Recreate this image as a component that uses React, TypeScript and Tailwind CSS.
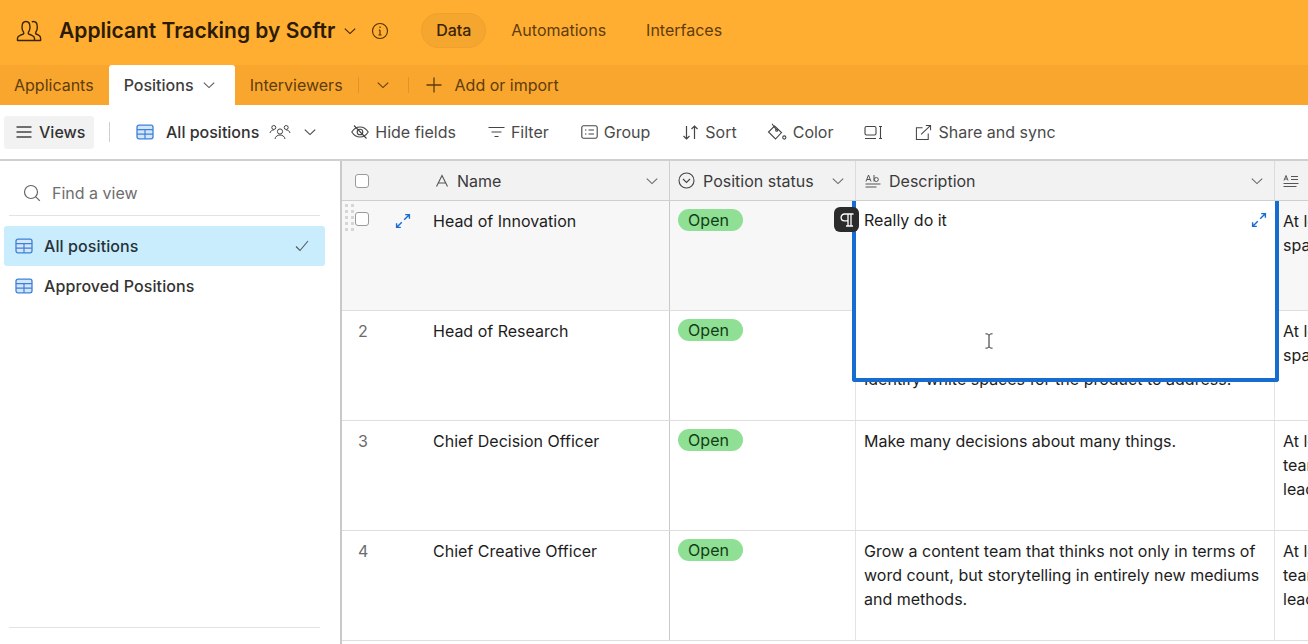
import React from 'react'

function Chevron({ className = '' }: { className?: string }) {
  return (
    <svg className={className} width="14" height="14" viewBox="0 0 14 14" fill="none" stroke="currentColor" strokeWidth="1.1">
      <path d="M1.800 4.600 7 9.600l5.200-5" />
    </svg>
  )
}

function GridIcon() {
  return (
    <svg width="18" height="16" viewBox="0 0 18 16" fill="none">
      <rect x="1" y="1.200" width="16" height="13.600" rx="2" fill="#d5e5fb" stroke="#3b82d8" strokeWidth="1.300" />
      <path d="M1 5.600h16M1 10.200h16M9 5.600v9.200" stroke="#3b82d8" strokeWidth="1.200" />
    </svg>
  )
}

function ExpandIcon({ className = '' }: { className?: string }) {
  return (
    <svg className={className} width="16" height="16" viewBox="0 0 16 16" fill="none" stroke="#166ccf" strokeWidth="1.400">
      <path d="M9.200 6.800 14 2M10.200 1.600h4.200v4.200" />
      <path d="M6.800 9.200 2 14M1.600 10.200v4.200h4.200" />
    </svg>
  )
}

function ToolItem({ icon, label, className = '' }: { icon: React.ReactNode; label?: string; className?: string }) {
  return (
    <div className={`flex items-center gap-[6px] text-[16px] text-[#4a4a4a] ${className}`}>
      {icon}
      {label && <span>{label}</span>}
    </div>
  )
}

type Row = {
  num: string
  name: string
  desc: string[]
  next: string[]
}

const rows: Row[] = [
  {
    num: '',
    name: 'Head of Innovation',
    desc: [],
    next: ['At least 5 years', 'spanning many fields'],
  },
  {
    num: '2',
    name: 'Head of Research',
    desc: ['Talk to customers and study the market.', 'Turn what you learn into clear findings.', 'Identify white spaces for the product to address.'],
    next: ['At least 5 years', 'spanning many fields'],
  },
  {
    num: '3',
    name: 'Chief Decision Officer',
    desc: ['Make many decisions about many things.'],
    next: ['At least 10 years', 'team management', 'leadership'],
  },
  {
    num: '4',
    name: 'Chief Creative Officer',
    desc: [
      'Grow a content team that thinks not only in terms of',
      'word count, but storytelling in entirely new mediums',
      'and methods.',
    ],
    next: ['At least 10 years', 'team management', 'leadership'],
  },
]

function TableRow({ row, index }: { row: Row; index: number }) {
  const first = index === 0
  return (
    <div className={`flex h-[110px] border-b border-[#dedede] text-[16px] text-[#1d1d1d] ${first ? 'bg-[#f7f7f7]' : 'bg-white'}`}>
      <div className="relative flex w-[328px] shrink-0 border-r border-[#c9c9c9]">
        {first ? (
          <>
            <div className="absolute left-[3px] top-[3px] grid grid-cols-2 gap-x-[3px] gap-y-[3px]">
              {Array.from({ length: 10 }).map((_, i) => (
                <div key={i} className="h-[3px] w-[3px] bg-[#d6d6d6]" />
              ))}
            </div>
            <div className="ml-[13px] mt-[11px] h-[14px] w-[14px] rounded-[3px] border border-[#9a9a9a] bg-white" />
            <ExpandIcon className="ml-[26px] mt-[12px]" />
          </>
        ) : (
          <div className="ml-[16px] mt-[9px] w-[44px] leading-[22px] text-[#6b6b6b]">{row.num}</div>
        )}
        <div className={`mt-[9px] leading-[22px] ${first ? 'ml-[22px]' : 'ml-[31px]'}`}>{row.name}</div>
      </div>
      <div className="w-[186px] shrink-0 border-r border-[#e3e3e3] pl-[8px] pt-[8px]">
        <div className="flex h-[22px] w-[65px] items-center justify-center rounded-full bg-[#8fdf94] pr-[4px] text-[#123d16]">Open</div>
      </div>
      <div className="w-[419px] shrink-0 border-r border-[#e3e3e3] pl-[8px] pt-[8px] leading-[24px]">
        {row.desc.map((l) => (
          <div key={l} className="whitespace-nowrap">{l}</div>
        ))}
      </div>
      <div className="flex-1 pl-[8px] pt-[8px] leading-[24px]">
        {row.next.map((l) => (
          <div key={l} className="whitespace-nowrap">{l}</div>
        ))}
      </div>
    </div>
  )
}

export default function App() {
  return (
    <div className="flex h-[644px] w-[1308px] flex-col overflow-hidden bg-white [font-family:Inter,sans-serif]">
      {/* app bar */}
      <div className="flex h-[65px] shrink-0 items-center bg-[#ffae31] pb-[4px] pl-[16px]">
        <svg width="26" height="24" viewBox="0 0 26 24" fill="none" stroke="#3a2405" strokeWidth="1.400" strokeLinejoin="round">
          <path d="M1.500 21.500v-2.200c0-1.400 1-2.200 2.600-2.900l3.200-1.400c.6-.3.6-1.200.2-2C6.400 11.600 6 10.200 6 8.200 6 4.500 7.500 2.500 10 2.500s4 2 4 5.700c0 2-.4 3.400-1.500 4.800-.4.800-.4 1.700.2 2l3.200 1.400c1.600.7 2.600 1.500 2.600 2.900v2.200z" />
          <path d="M15.800 2.900c.5-.3 1.100-.4 1.700-.4 2.400 0 3.800 2 3.800 5.700 0 2-.4 3.400-1.400 4.800-.4.800-.4 1.700.2 2l2.500 1.200c1.400.7 2 1.500 2 2.900v2.400h-6" />
        </svg>
        <div className="ml-[17px] text-[21px] font-semibold text-[#2b1a04]">Applicant Tracking by Softr</div>
        <Chevron className="ml-[8px] text-[#3a2405]" />
        <svg className="ml-[14px]" width="18" height="18" viewBox="0 0 18 18" fill="none" stroke="#4a3008" strokeWidth="1.100">
          <circle cx="9" cy="9" r="7.500" />
          <path d="M9 8v5M7.500 13h3M7.800 8H9" />
          <circle cx="9" cy="5.300" r=".8" fill="#4a3008" stroke="none" />
        </svg>
        <div className="ml-[32px] flex h-[35px] w-[65px] items-center justify-center rounded-full border border-[#f0a02c] bg-[#f5a62e] pb-[1px] text-[16px] font-medium text-[#3a2405]">Data</div>
        <div className="ml-[25px] pb-[1px] text-[16px] text-[#5e3d0d]">Automations</div>
        <div className="ml-[40px] pb-[1px] text-[16px] text-[#5e3d0d]">Interfaces</div>
      </div>

      {/* table tabs */}
      <div className="flex h-[40px] shrink-0 items-center bg-[#f9a62f] text-[16px] text-[#5e3d0d]">
        <div className="pl-[14px]">Applicants</div>
        <div className="ml-[15px] flex h-[40px] w-[126px] items-center rounded-t-[3px] bg-white pl-[15px] font-medium text-[#3d3d3d]">
          Positions
          <Chevron className="ml-[8px] text-[#5a5a5a]" />
        </div>
        <div className="ml-[15px]">Interviewers</div>
        <div className="ml-[15px] h-[16px] w-px bg-[#e0932a]" />
        <Chevron className="ml-[17px]" />
        <div className="ml-[18px] h-[16px] w-px bg-[#e0932a]" />
        <svg className="ml-[17px]" width="16" height="16" viewBox="0 0 16 16" fill="none" stroke="#5e3d0d" strokeWidth="1.300">
          <path d="M8 .5v15M.5 8h15" />
        </svg>
        <div className="ml-[13px]">Add or import</div>
      </div>

      {/* toolbar */}
      <div className="flex h-[56px] shrink-0 items-center border-b-2 border-[#cfcfcf] pl-[4px]">
        <div className="flex h-[33px] w-[90px] items-center gap-[7px] rounded-[3px] bg-[#f2f2f2] pl-[12px] text-[16px] font-medium text-[#333]">
          <svg width="16" height="12" viewBox="0 0 16 12" fill="none" stroke="#444" strokeWidth="1.300">
            <path d="M.5 1h15M.5 6h15M.5 11h15" />
          </svg>
          Views
        </div>
        <div className="ml-[15px] h-[20px] w-px bg-[#cfcfcf]" />
        <div className="ml-[26px]"><GridIcon /></div>
        <div className="ml-[12px] text-[16px] font-medium text-[#333]">All positions</div>
        <svg className="ml-[10px]" width="22" height="16" viewBox="0 0 22 16" fill="none" stroke="#444" strokeWidth="1">
          <circle cx="11" cy="7.500" r="2.600" />
          <path d="M6 15c.5-2.600 2.500-4 5-4s4.500 1.400 5 4" />
          <circle cx="4.800" cy="3.500" r="2" />
          <path d="M1 9c.4-1.800 1.800-3 3.800-3" />
          <circle cx="17.200" cy="3.500" r="2" />
          <path d="M21 9c-.4-1.800-1.800-3-3.800-3" />
        </svg>
        <Chevron className="ml-[12px] text-[#444]" />
        <div className="ml-[34px] flex items-center">
          <ToolItem
            label="Hide fields"
            icon={
              <svg width="18" height="16" viewBox="0 0 18 16" fill="none" stroke="#444" strokeWidth="1.100">
                <path d="M.8 8C3 4.500 5.700 3 9 3s6 1.500 8.200 5C15 11.500 12.300 13 9 13S3 11.500.8 8z" />
                <circle cx="9" cy="8" r="2.800" />
                <path d="M3 1.500 15.500 14.500" />
              </svg>
            }
          />
          <ToolItem
            className="ml-[32px]"
            label="Filter"
            icon={
              <svg width="17" height="12" viewBox="0 0 17 12" fill="none" stroke="#444" strokeWidth="1.200">
                <path d="M.5 1.500h16M3.500 6h10M6.500 10.500h4" />
              </svg>
            }
          />
          <ToolItem
            className="ml-[32px]"
            label="Group"
            icon={
              <svg width="17" height="14" viewBox="0 0 17 14" fill="none" stroke="#444" strokeWidth="1.100">
                <rect x=".8" y=".8" width="15.400" height="12.400" rx="1.800" />
                <path d="M4 5h1.400M4 9h1.400M7.500 5H13M7.500 9H13" />
              </svg>
            }
          />
          <ToolItem
            className="ml-[32px]"
            label="Sort"
            icon={
              <svg width="17" height="15" viewBox="0 0 17 15" fill="none" stroke="#444" strokeWidth="1.200">
                <path d="M4.500 1v13M1.500 11l3 3 3-3" />
                <path d="M12.500 14V1M9.500 4l3-3 3 3" />
              </svg>
            }
          />
          <ToolItem
            className="ml-[30px]"
            label="Color"
            icon={
              <svg width="20" height="18" viewBox="0 0 20 18" fill="none" stroke="#444" strokeWidth="1.100">
                <path d="M7.500 3 14.500 9.500 8.500 16 1.500 9z" />
                <path d="M5 .8 9.500 7" />
                <circle cx="9.700" cy="7.300" r="1" />
                <circle cx="17.300" cy="14.500" r="1.600" />
              </svg>
            }
          />
          <ToolItem
            className="ml-[31px]"
            icon={
              <svg width="20" height="15" viewBox="0 0 20 15" fill="none" stroke="#444" strokeWidth="1.100">
                <rect x="1" y="1.500" width="11" height="8.500" rx="1.500" />
                <path d="M1 13.500h11M16.500 2v11M15 1.500h3M15 13.500h3" />
              </svg>
            }
          />
          <ToolItem
            className="ml-[31px]"
            label="Share and sync"
            icon={
              <svg width="17" height="17" viewBox="0 0 18 17" fill="none" stroke="#444" strokeWidth="1.100">
                <path d="M8 3.500H1.500v12.500H14V9.500" />
                <path d="M6.500 10.500 16.500 1M11.500 1H16.500V6" />
              </svg>
            }
          />
        </div>
      </div>

      <div className="flex min-h-0 flex-1">
        {/* views sidebar */}
        <div className="flex w-[342px] shrink-0 flex-col border-r-2 border-[#c9c9c9] pb-[16px]">
          <div className="ml-[9px] flex h-[55px] w-[311px] shrink-0 items-center gap-[11px] border-b border-[#e3e3e3] pl-[14px] pt-[10px] text-[16px] text-[#6e6e6e]">
            <svg width="18" height="18" viewBox="0 0 18 18" fill="none" stroke="#666" strokeWidth="1.200">
              <circle cx="8" cy="8" r="6.500" />
              <path d="m12.800 12.800 4 4" />
            </svg>
            Find a view
          </div>
          <div className="mx-[4px] mt-[10px] flex h-[40px] w-[321px] shrink-0 items-center rounded-[3px] bg-[#c9edfd] pl-[11px] pr-[16px] text-[16px] font-medium tracking-[0.1px] text-[#26323a]">
            <GridIcon />
            <span className="ml-[11px] flex-1">All positions</span>
            <svg width="14" height="12" viewBox="0 0 14 12" fill="none" stroke="#4d5b63" strokeWidth="1.100">
              <path d="m1 6.500 4 4 8-9.500" />
            </svg>
          </div>
          <div className="mx-[4px] flex h-[40px] shrink-0 items-center pl-[11px] text-[16px] font-medium tracking-[0.1px] text-[#333]">
            <GridIcon />
            <span className="ml-[11px]">Approved Positions</span>
          </div>
          <div className="ml-[9px] mt-auto h-px w-[311px] bg-[#e3e3e3]" />
        </div>

        {/* grid */}
        <div className="relative min-w-0 flex-1">
          <div className="flex h-[40px] border-b border-[#cfcfcf] bg-[#f2f2f2] text-[16px] text-[#3a3a3a]">
            <div className="flex w-[328px] shrink-0 items-center border-r border-[#cfcfcf] pr-[10px]">
              <div className="ml-[13px] h-[14px] w-[14px] rounded-[3px] border border-[#9a9a9a] bg-white" />
              <svg className="ml-[66px]" width="14" height="14" viewBox="0 0 14 14" fill="none" stroke="#555" strokeWidth="1.100">
                <path d="M1.500 12.500 7 1.500l5.500 11M3.500 9h7" />
              </svg>
              <span className="ml-[8px] flex-1">Name</span>
              <Chevron className="text-[#6a6a6a]" />
            </div>
            <div className="flex w-[186px] shrink-0 items-center border-r border-[#dcdcdc] pl-[8px] pr-[10px]">
              <svg width="17" height="17" viewBox="0 0 17 17" fill="none" stroke="#444" strokeWidth="1.100">
                <circle cx="8.500" cy="8.500" r="7.500" />
                <path d="m5 7 3.500 3.500L12 7" />
              </svg>
              <span className="ml-[8px] flex-1">Position status</span>
              <Chevron className="text-[#6a6a6a]" />
            </div>
            <div className="flex w-[419px] shrink-0 items-center border-r border-[#dcdcdc] pl-[9px] pr-[10px]">
              <svg width="16" height="16" viewBox="0 0 16 16" fill="none" stroke="#555" strokeWidth="1">
                <path d="M1 8.500 3.500 2 6 8.500M2 6.500h3M9 2v6.500" />
                <circle cx="11.300" cy="6.500" r="2" />
                <path d="M.5 11h15M.5 14h11" />
              </svg>
              <span className="ml-[8px] flex-1">Description</span>
              <Chevron className="text-[#6a6a6a]" />
            </div>
            <div className="flex flex-1 items-center pl-[8px]">
              <svg width="16" height="16" viewBox="0 0 16 16" fill="none" stroke="#555" strokeWidth="1">
                <path d="M1 7.500 3 2.500l2 5M2 6h2M8 3.500h7M8 6.500h7M.5 10.500h15M.5 13.500h13" />
              </svg>
            </div>
          </div>

          {rows.map((row, i) => (
            <TableRow key={row.name} row={row} index={i} />
          ))}

          {/* active cell editor */}
          <div className="absolute left-[510px] top-[40px] h-[181px] w-[427px] rounded-b-[3px] border-x-[4px] border-b-[4px] border-[#166ccf] bg-white">
            <div className="pl-[8px] pt-[8px] text-[16px] leading-[22px] text-[#1d1d1d]">Really do it</div>
            <ExpandIcon className="absolute right-[8px] top-[11px]" />
            <svg className="absolute left-[128px] top-[132px]" width="10" height="16" viewBox="0 0 10 16" fill="none" stroke="#222" strokeWidth="1">
              <path d="M1.500 .8c1.700 0 3 .4 3.500 1.500C5.500 1.200 6.800.8 8.500.8M1.500 15.200c1.700 0 3-.4 3.500-1.500.5 1.100 1.800 1.500 3.500 1.500M5 2.300v11.400" />
            </svg>
          </div>
          <div className="absolute left-[492px] top-[46px] flex h-[25px] w-[25px] items-center justify-center rounded-[6px] bg-[#2b2b2b]">
            <svg width="18" height="18" viewBox="0 0 18 18" fill="none" stroke="#fff" strokeWidth="1.300">
              <path d="M15.500 3H6.500a3.400 3.400 0 0 0 0 6.800H10" />
              <path d="M10 3v12M13 3v12M8 15h7" />
            </svg>
          </div>
        </div>
      </div>
    </div>
  )
}
